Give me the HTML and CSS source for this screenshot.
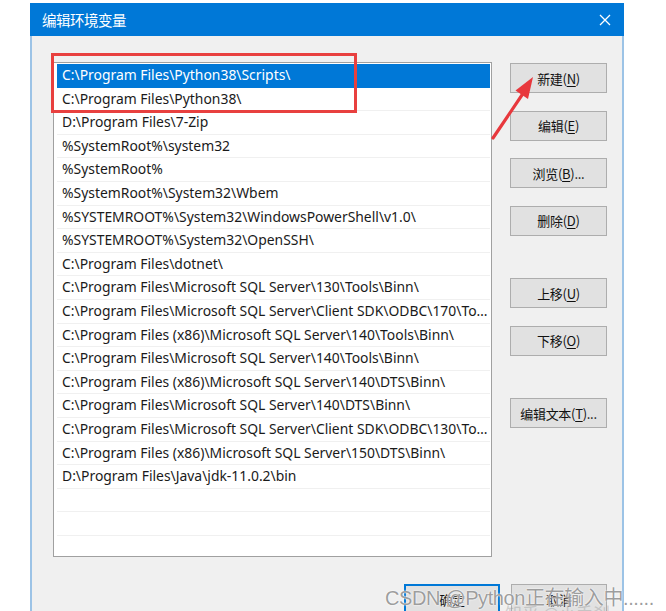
FILE: index.html
```html
<!DOCTYPE html>
<html lang="zh-CN">
<head>
<meta charset="utf-8">
<title>编辑环境变量</title>
<link rel="stylesheet" href="styles.css">
</head>
<body>
<div class="dialog">
  <div class="titlebar">
    <span class="title">编辑环境变量</span>
    <svg class="close" width="12" height="12" viewBox="0 0 12 12"><path d="M1 1L11 11M11 1L1 11" stroke="#fff" stroke-width="1.3" fill="none"/></svg>
  </div>
  <div class="body">
    <div class="main">
      <div class="list">
        <div class="row sel">C:\Program Files\Python38\Scripts\</div>
        <div class="row">C:\Program Files\Python38\</div>
        <div class="row">D:\Program Files\7-Zip</div>
        <div class="row">%SystemRoot%\system32</div>
        <div class="row">%SystemRoot%</div>
        <div class="row">%SystemRoot%\System32\Wbem</div>
        <div class="row">%SYSTEMROOT%\System32\WindowsPowerShell\v1.0\</div>
        <div class="row">%SYSTEMROOT%\System32\OpenSSH\</div>
        <div class="row">C:\Program Files\dotnet\</div>
        <div class="row">C:\Program Files\Microsoft SQL Server\130\Tools\Binn\</div>
        <div class="row">C:\Program Files\Microsoft SQL Server\Client SDK\ODBC\170\Tools\Binn\</div>
        <div class="row">C:\Program Files (x86)\Microsoft SQL Server\140\Tools\Binn\</div>
        <div class="row">C:\Program Files\Microsoft SQL Server\140\Tools\Binn\</div>
        <div class="row">C:\Program Files (x86)\Microsoft SQL Server\140\DTS\Binn\</div>
        <div class="row">C:\Program Files\Microsoft SQL Server\140\DTS\Binn\</div>
        <div class="row">C:\Program Files\Microsoft SQL Server\Client SDK\ODBC\130\Tools\Binn\</div>
        <div class="row">C:\Program Files (x86)\Microsoft SQL Server\150\DTS\Binn\</div>
        <div class="row">D:\Program Files\Java\jdk-11.0.2\bin</div>
        <div class="row"></div>
        <div class="row"></div>
        <div class="row last"></div>
      </div>
      <div class="buttons">
        <div class="btn">新建(<u>N</u>)</div>
        <div class="btn">编辑(<u>E</u>)</div>
        <div class="btn">浏览(<u>B</u>)...</div>
        <div class="btn">删除(<u>D</u>)</div>
        <div class="btn group">上移(<u>U</u>)</div>
        <div class="btn">下移(<u>O</u>)</div>
        <div class="btn group">编辑文本(<u>T</u>)...</div>
      </div>
    </div>
    <div class="footer">
      <div class="btn default">确定</div>
      <div class="btn">取消</div>
    </div>
  </div>
</div>
<div class="redbox"></div>
<svg class="arrow" width="666" height="611" viewBox="0 0 666 611">
  <path d="M493 138 L524 92" stroke="#e8383d" stroke-width="3.2" stroke-linecap="round" fill="none"/>
  <polygon points="533,77 528,99 515.5,90.5" fill="#e8383d"/>
</svg>
<div class="watermark">CSDN @Python正在输入中......</div>
<div class="watermark2">知乎 @小手刹</div>
</body>
</html>
```
FILE: styles.css
```css
html, body {
  margin: 0;
  padding: 0;
  background: #ffffff;
  overflow: hidden;
  height: 611px;
}
body {
  position: relative;
  font-family: "Noto Sans", "Noto Sans CJK SC", sans-serif;
  font-size: 13px;
  color: #1a1a1a;
}
.dialog {
  margin: 3px 0 0 30px;
  width: 594px;
  height: 660px;
  background: #f0f0f0;
  border-left: 2px solid #9cc3e6;
  border-right: 2px solid #9cc3e6;
  box-sizing: border-box;
}
.titlebar {
  height: 33px;
  margin: 0 -2px;
  background: #0078d7;
  display: flex;
  align-items: center;
  justify-content: space-between;
  padding: 0 13px 0 12px;
  color: #fff;
}
.title {
  font-family: "Noto Sans CJK SC", sans-serif;
  font-size: 14.5px;
  letter-spacing: -0.5px;
}
.close {
  display: block;
}
.body {
  padding: 26px 15px 0 21px;
}
.main {
  display: flex;
  gap: 18px;
  align-items: flex-start;
}
.list {
  width: 439px;
  height: 495px;
  box-sizing: border-box;
  background: #fff;
  border: 1px solid #a0a0a0;
  padding: 1px 1px 0 3px;
  overflow: hidden;
}
.row {
  height: 23.6px;
  box-sizing: border-box;
  line-height: 22px;
  padding-left: 5px;
  padding-right: 2px;
  border-bottom: 1px solid #f0f0f0;
  white-space: nowrap;
  overflow: hidden;
  text-overflow: ellipsis;
  font-size: 13.9px;
}
.row.sel {
  background: #0078d7;
  color: #fff;
  border-bottom-color: #0078d7;
}
.buttons {
  display: flex;
  flex-direction: column;
  gap: 17.5px;
  padding-top: 1px;
}
.btn {
  width: 97px;
  height: 30px;
  box-sizing: border-box;
  background: #e1e1e1;
  border: 1px solid #adadad;
  display: flex;
  align-items: center;
  justify-content: center;
  font-family: "Noto Sans CJK SC", sans-serif;
  font-size: 13px;
  color: #111;
  letter-spacing: -0.3px;
}
.btn u {
  text-underline-offset: 2px;
}
.btn.group {
  margin-top: 25px;
}
.footer {
  display: flex;
  justify-content: flex-end;
  gap: 11px;
  margin-top: 27px;
}
.footer .btn {
  width: 96px;
}
.btn.default {
  border: 2px solid #0078d7;
}
.redbox {
  position: absolute;
  left: 51px;
  top: 53px;
  width: 306px;
  height: 60px;
  box-sizing: border-box;
  border: 3px solid #e8403f;
}
.arrow {
  position: absolute;
  left: 0;
  top: 0;
}
.watermark {
  position: absolute;
  left: 385px;
  top: 582px;
  font-family: "Liberation Sans", "Noto Sans CJK SC", sans-serif;
  font-size: 20px;
  color: rgba(140, 140, 140, 0.85);
  text-shadow: 0 0 1px #fff, 0 0 2px #fff;
  letter-spacing: -0.4px;
  white-space: nowrap;
}
.watermark2 {
  position: absolute;
  left: 505px;
  top: 600px;
  font-family: "Noto Sans CJK SC", sans-serif;
  font-size: 17px;
  color: rgba(160, 160, 160, 0.45);
  white-space: nowrap;
}
```
